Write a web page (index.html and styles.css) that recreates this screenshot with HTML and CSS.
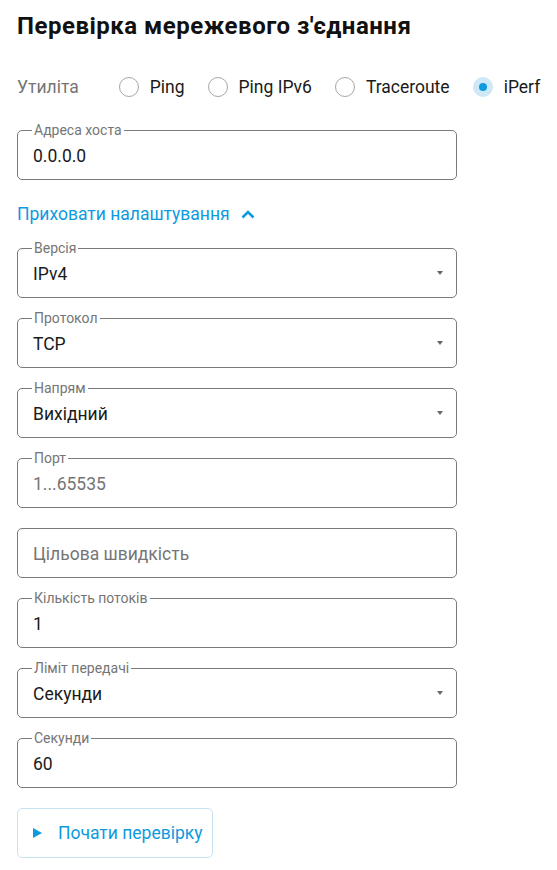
FILE: index.html
```html
<!DOCTYPE html>
<html lang="uk">
<head>
<meta charset="utf-8">
<title>Перевірка мережевого з'єднання</title>
<link rel="stylesheet" href="styles.css">
</head>
<body>
<main class="page">
  <h1 class="title">Перевірка мережевого з'єднання</h1>

  <div class="utility">
    <span class="utility-label">Утиліта</span>
    <div class="radios">
      <label class="radio"><span class="radio-circle"></span><span>Ping</span></label>
      <label class="radio"><span class="radio-circle"></span><span>Ping IPv6</span></label>
      <label class="radio"><span class="radio-circle"></span><span>Traceroute</span></label>
      <label class="radio"><span class="radio-circle checked"></span><span>iPerf</span></label>
    </div>
  </div>

  <div class="field host">
    <span class="field-label">Адреса хоста</span>
    <span class="value">0.0.0.0</span>
  </div>

  <div class="toggle">
    <span>Приховати налаштування</span>
    <svg class="chevron" width="14" height="9" viewBox="0 0 14 9"><polyline points="1.5,7.5 7,2 12.5,7.5" fill="none" stroke="currentColor" stroke-width="2.6"/></svg>
  </div>

  <div class="settings">
    <div class="field select">
      <span class="field-label">Версія</span>
      <span class="value">IPv4</span>
      <span class="arrow"></span>
    </div>
    <div class="field select">
      <span class="field-label">Протокол</span>
      <span class="value">TCP</span>
      <span class="arrow"></span>
    </div>
    <div class="field select">
      <span class="field-label">Напрям</span>
      <span class="value">Вихідний</span>
      <span class="arrow"></span>
    </div>
    <div class="field">
      <span class="field-label">Порт</span>
      <span class="value placeholder">1...65535</span>
    </div>
    <div class="field">
      <span class="value placeholder">Цільова швидкість</span>
    </div>
    <div class="field">
      <span class="field-label">Кількість потоків</span>
      <span class="value">1</span>
    </div>
    <div class="field select">
      <span class="field-label">Ліміт передачі</span>
      <span class="value">Секунди</span>
      <span class="arrow"></span>
    </div>
    <div class="field">
      <span class="field-label">Секунди</span>
      <span class="value">60</span>
    </div>
  </div>

  <button class="start" type="button">
    <svg class="play" width="9" height="10" viewBox="0 0 9 10"><polygon points="0,0 9,5 0,10" fill="currentColor"/></svg>
    <span>Почати перевірку</span>
  </button>
</main>
</body>
</html>
```

FILE: styles.css
```css
html, body {
  margin: 0;
  padding: 0;
  background: #ffffff;
}

body {
  font-family: Roboto, "Noto Sans", "Liberation Sans", sans-serif;
  color: #1a1a1a;
  font-size: 17.5px;
}

.page {
  width: 440px;
  padding: 0 17px;
}

.title {
  margin: 12px 0 0;
  font-size: 24px;
  line-height: 28px;
  font-weight: 700;
  letter-spacing: 0.5px;
  color: #111111;
  white-space: nowrap;
}

.utility {
  margin-top: 35px;
  height: 24px;
  display: flex;
  align-items: center;
  white-space: nowrap;
}

.utility-label {
  color: #757575;
  margin-right: 40px;
}

.radios {
  display: flex;
  align-items: center;
  gap: 23px;
}

.radio {
  display: flex;
  align-items: center;
  gap: 11px;
  color: #1a1a1a;
}

.radio-circle {
  width: 18px;
  height: 18px;
  border: 1px solid #a6a6a6;
  border-radius: 50%;
  box-sizing: content-box;
  display: flex;
  align-items: center;
  justify-content: center;
}

.radio-circle.checked {
  border-color: #cfe8f8;
  background: #cfe8f8;
}

.radio-circle.checked::after {
  content: "";
  width: 8px;
  height: 8px;
  border-radius: 50%;
  background: #0e9ade;
}

.field {
  position: relative;
  box-sizing: border-box;
  height: 50px;
  border: 1px solid #7a7a7a;
  border-radius: 5px;
  padding: 0 13px 0 15px;
  display: flex;
  align-items: center;
  justify-content: space-between;
}

.host {
  margin-top: 31px;
}

.field-label {
  position: absolute;
  top: -9px;
  left: 14px;
  padding: 0 2px;
  background: #ffffff;
  font-size: 14px;
  line-height: 16px;
  color: #757575;
  white-space: nowrap;
}

.value {
  line-height: 24px;
  padding-top: 2px;
}

.placeholder {
  color: #757575;
}

.arrow {
  width: 0;
  height: 0;
  border-left: 3.5px solid transparent;
  border-right: 3.5px solid transparent;
  border-top: 4.5px solid #666666;
}

.toggle {
  margin-top: 22px;
  height: 24px;
  display: flex;
  align-items: center;
  gap: 11px;
  color: #0e9ade;
}

.chevron {
  display: block;
}

.settings {
  margin-top: 22px;
  display: flex;
  flex-direction: column;
  gap: 20px;
}

.start {
  margin-top: 20px;
  height: 50px;
  box-sizing: border-box;
  padding: 0 9px 0 15px;
  border: 1px solid #c6e3f4;
  border-radius: 5px;
  background: #ffffff;
  color: #0e9ade;
  font-family: inherit;
  font-size: 17.5px;
  display: flex;
  align-items: center;
  gap: 16px;
  cursor: pointer;
}

.play {
  display: block;
}
```
